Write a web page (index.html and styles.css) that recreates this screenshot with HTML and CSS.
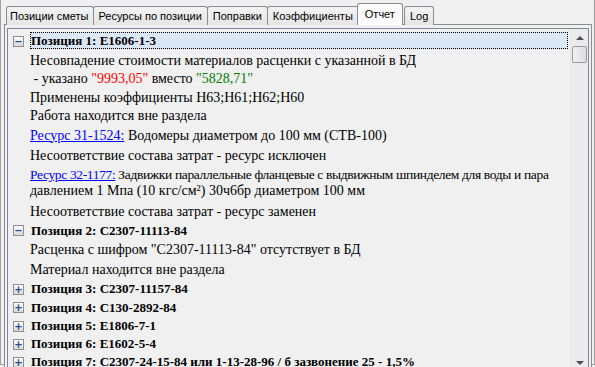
FILE: index.html
```html
<!DOCTYPE html>
<html lang="ru">
<head>
    <meta charset="UTF-8">
    <title>Отчет</title>
    <link rel="stylesheet" href="styles.css">
</head>
<body>
    <div class="window">
        <!-- tab strip -->
        <ul class="tabs">
            <li class="tab">Позиции сметы</li>
            <li class="tab">Ресурсы по позиции</li>
            <li class="tab">Поправки</li>
            <li class="tab">Коэффициенты</li>
            <li class="tab active">Отчет</li>
            <li class="tab">Log</li>
        </ul>

        <div class="panel">
            <div class="listbox">
                <div class="rows">
                    <div class="row head selected r20"><span class="toggle">&minus;</span><span class="caption">Позиция 1: Е1606-1-3</span></div>
                    <div class="row r19">Несовпадение стоимости материалов расценки с указанной в БД</div>
                    <div class="row r18">&nbsp;- указано <span class="bad">"9993,05"</span> вместо <span class="good">"5828,71"</span></div>
                    <div class="row r19">Применены коэффициенты Н63;Н61;Н62;Н60</div>
                    <div class="row r18">Работа находится вне раздела</div>
                    <div class="row r21"><a href="#">Ресурс 31-1524:</a> Водомеры диаметром до 100 мм (СТВ-100)</div>
                    <div class="row r19">Несоответствие состава затрат - ресурс исключен</div>
                    <div class="row multi"><span class="squeeze"><a href="#">Ресурс 32-1177:</a> Задвижки параллельные фланцевые с выдвижным шпинделем для воды и пара</span><br>давлением 1 Мпа (10 кгс/см²) 30ч6бр диаметром 100 мм</div>
                    <div class="row r17">Несоответствие состава затрат - ресурс заменен</div>
                    <div class="row head r21"><span class="toggle">&minus;</span><span class="caption">Позиция 2: С2307-11113-84</span></div>
                    <div class="row r18">Расценка с шифром "С2307-11113-84" отсутствует в БД</div>
                    <div class="row r21">Материал находится вне раздела</div>
                    <div class="row head r18"><span class="toggle">+</span><span class="caption">Позиция 3: С2307-11157-84</span></div>
                    <div class="row head r19"><span class="toggle">+</span><span class="caption">Позиция 4: С130-2892-84</span></div>
                    <div class="row head r18"><span class="toggle">+</span><span class="caption">Позиция 5: Е1806-7-1</span></div>
                    <div class="row head r18"><span class="toggle">+</span><span class="caption">Позиция 6: Е1602-5-4</span></div>
                    <div class="row head r18"><span class="toggle">+</span><span class="caption">Позиция 7: С2307-24-15-84 или 1-13-28-96 / б зазвонение 25 - 1,5%</span></div>
                </div>
                <div class="scrollbar">
                    <span class="arrow up"></span>
                    <span class="thumb"></span>
                    <span class="track"></span>
                    <span class="arrow down"></span>
                </div>
            </div>
        </div>
    </div>
</body>
</html>
```

FILE: styles.css
```css
html, body {
    margin: 0;
    padding: 0;
}

body {
    width: 595px;
    height: 367px;
    overflow: hidden;
    background: #f0f0f0;
}

.window {
    box-sizing: border-box;
    width: 595px;
    height: 365px;
    border-left: 1px solid #a0a0a0;
    border-right: 1px solid #a0a0a0;
    border-bottom: 1px solid #a0a0a0;
    padding: 3px 2px 2px 3px;
    display: flex;
    flex-direction: column;
}

/* tabs */

.tabs {
    list-style: none;
    margin: 0 0 -1px 0;
    padding: 0 0 0 2px;
    display: flex;
    align-items: flex-end;
    height: 22px;
    position: relative;
    z-index: 1;
}

.tab {
    box-sizing: border-box;
    height: 19px;
    padding: 0 5px;
    margin-right: -1px;
    border: 1px solid #898c95;
    border-bottom: none;
    border-radius: 3px 3px 0 0;
    background: linear-gradient(#f3f3f3, #e5e5e5);
    font-family: "Liberation Sans", Arial, sans-serif;
    font-size: 11px;
    line-height: 18px;
    color: #000;
    white-space: nowrap;
}

.tab:first-child {
    padding: 0 4px 0 3px;
}

.tab.active {
    height: 22px;
    padding: 0 7px;
    margin: 0 1px 0 -1px;
    background: #fcfcfe;
    line-height: 20px;
}

/* panel with the report list */

.panel {
    flex: 1;
    border: 1px solid #898c95;
    background: #f0f0f0;
    padding: 3px 2px 2px 2px;
    display: flex;
}

.listbox {
    flex: 1;
    display: flex;
    border: 1px solid #828790;
    background: #f0f0f0;
    overflow: hidden;
}

.rows {
    flex: 1;
    padding: 2px 2px 0 4px;
    overflow: hidden;
    font-family: "Liberation Serif", "Times New Roman", serif;
    font-size: 14px;
    color: #000;
}

.row {
    box-sizing: border-box;
    display: flex;
    align-items: center;
    padding-left: 18px;
    white-space: pre;
}

.r17 { height: 17px; }
.r18 { height: 18px; }
.r19 { height: 19px; }
.r20 { height: 20px; }
.r21 { height: 21px; }
.r22 { height: 22px; }

.row.multi {
    display: block;
    line-height: 16px;
    padding-top: 2px;
    height: 38px;
}

/* first line of the long resource text has to fit before the scrollbar */
.squeeze {
    font-size: 13.5px;
    letter-spacing: -0.35px;
}

.row.head {
    padding-left: 0;
    font-size: 13px;
    font-weight: bold;
}

.toggle {
    box-sizing: border-box;
    width: 11px;
    height: 11px;
    margin: 0 6px 0 1px;
    border: 1px solid #8e8f8f;
    background: linear-gradient(#fdfdfd, #d9d9d9);
    color: #2d4a86;
    font-family: "DejaVu Sans", sans-serif;
    font-size: 10px;
    font-weight: bold;
    line-height: 9px;
    text-align: center;
    flex-shrink: 0;
}

.caption {
    padding: 0 1px;
}

.row.selected .caption {
    flex: 1;
    align-self: stretch;
    margin-top: 1px;
    margin-bottom: 2px;
    display: flex;
    align-items: center;
    background: #dce7f5;
    outline: 1px dotted #000;
    outline-offset: -1px;
}

.row a {
    color: #0000ff;
    text-decoration: underline;
}

.bad {
    color: #ff0000;
}

.good {
    color: #008000;
}

/* scrollbar */

.scrollbar {
    width: 17px;
    display: flex;
    flex-direction: column;
    background: #ebebeb;
    border-left: 1px solid #e6e6e6;
}

.arrow {
    height: 17px;
    display: flex;
    align-items: center;
    justify-content: center;
}

.arrow::before {
    content: "";
    border-left: 4px solid transparent;
    border-right: 4px solid transparent;
}

.arrow.up::before {
    border-bottom: 4px solid #4d4d4d;
}

.arrow.down::before {
    border-top: 4px solid #4d4d4d;
}

.thumb {
    box-sizing: border-box;
    height: 17px;
    margin: 0 1px;
    border: 1px solid #9a9a9a;
    border-radius: 2px;
    background: linear-gradient(90deg, #f2f2f2, #dcdcdc);
}

.track {
    flex: 1;
}
```
